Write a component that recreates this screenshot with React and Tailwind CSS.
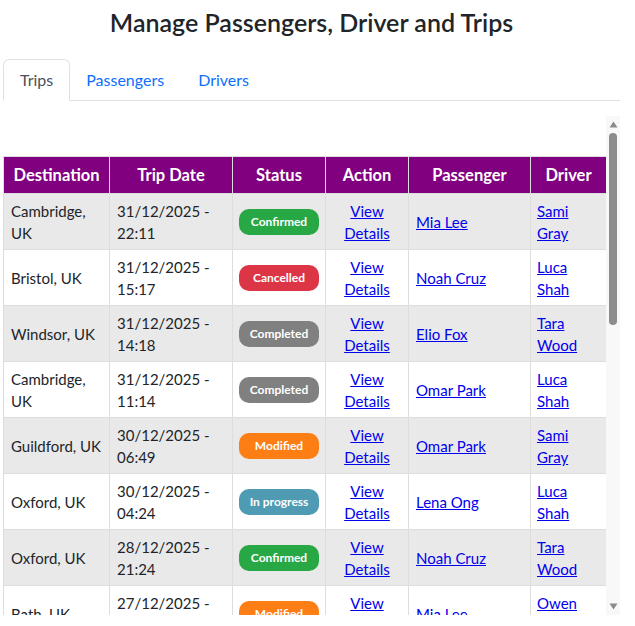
import React from "react";

const rows = [
  ["Cambridge, UK", "31/12/2025 - 22:11", "Confirmed", "Mia Lee", "Sami Gray"],
  ["Bristol, UK", "31/12/2025 - 15:17", "Cancelled", "Noah Cruz", "Luca Shah"],
  ["Windsor, UK", "31/12/2025 - 14:18", "Completed", "Elio Fox", "Tara Wood"],
  ["Cambridge, UK", "31/12/2025 - 11:14", "Completed", "Omar Park", "Luca Shah"],
  ["Guildford, UK", "30/12/2025 - 06:49", "Modified", "Omar Park", "Sami Gray"],
  ["Oxford, UK", "30/12/2025 - 04:24", "In progress", "Lena Ong", "Luca Shah"],
  ["Oxford, UK", "28/12/2025 - 21:24", "Confirmed", "Noah Cruz", "Tara Wood"],
  ["Bath, UK", "27/12/2025 - 19:05", "Modified", "Mia Lee", "Owen Hale"],
  ["Reading, UK", "26/12/2025 - 08:30", "Confirmed", "Elio Fox", "Sami Gray"],
];

const badge = {
  Confirmed: "bg-[#28a745]",
  Cancelled: "bg-[#dc3545]",
  Completed: "bg-[#808080]",
  Modified: "bg-[#fd7e14]",
  "In progress": "bg-[#4e9bb3]",
};

const font = { fontFamily: "Lato, 'Liberation Sans', sans-serif" };

export default function App() {
  return (
    <div className="bg-white text-[#212529] w-[635px] h-[626px] overflow-hidden" style={font}>
      <div className="ml-[3px] w-[617px]">
        <h2 className="text-center text-[25px] font-semibold leading-[32px] pt-[6px] mb-[21px] text-[#212529]">
          Manage Passengers, Driver and Trips
        </h2>
        <div className="flex border-b border-[#dee2e6] h-[42px]">
          <div className="-mb-px px-4 h-[42px] flex items-center text-[16px] text-[#495057] bg-white border border-[#dee2e6] border-b-white rounded-t-[6px]">
            Trips
          </div>
          <div className="px-4 h-[42px] flex items-center text-[16px] text-[#0d6efd]">Passengers</div>
          <div className="pl-[18px] pr-4 h-[42px] flex items-center text-[16px] text-[#0d6efd]">Drivers</div>
        </div>
        <div className="flex mt-[15px] h-[499px]">
          <div className="w-[603px] h-full overflow-hidden pt-[40px]">
            <table className="table-fixed border-collapse w-[603px] text-[15px] leading-[22px]">
              <colgroup>
                <col className="w-[106px]" />
                <col className="w-[123px]" />
                <col className="w-[93px]" />
                <col className="w-[83px]" />
                <col className="w-[122px]" />
                <col className="w-[76px]" />
              </colgroup>
              <thead>
                <tr className="bg-[#800080] text-white text-[16.5px] font-bold">
                  {["Destination", "Trip Date", "Status", "Action", "Passenger", "Driver"].map((h) => (
                    <th key={h} className="border border-[#dddddd] py-[6px] leading-[24px] text-center font-bold">
                      {h}
                    </th>
                  ))}
                </tr>
              </thead>
              <tbody>
                {rows.map((r, i) => (
                  <tr key={i} className={i % 2 === 0 ? "bg-[#e9e9e9]" : "bg-white"}>
                    <td className="border border-[#dddddd] px-[7px] pt-[6px] pb-[5px] align-middle">{r[0]}</td>
                    <td className="border border-[#dddddd] px-[7px] pt-[6px] pb-[5px] align-middle">{r[1]}</td>
                    <td className="border border-[#dddddd] px-[6px] pt-[6px] pb-[5px] align-middle">
                      <div className="flex justify-center">
                        <span className={`${badge[r[2]]} w-[80px] h-[26px] rounded-[10px] text-white text-[12px] font-bold flex items-center justify-center`}>
                          {r[2]}
                        </span>
                      </div>
                    </td>
                    <td className="border border-[#dddddd] px-[7px] pt-[6px] pb-[5px] text-center align-middle">
                      <a href="#" className="text-[#0000ee] underline">View Details</a>
                    </td>
                    <td className="border border-[#dddddd] px-[7px] pt-[6px] pb-[5px] align-middle">
                      <a href="#" className="text-[#0000ee] underline">{r[3]}</a>
                    </td>
                    <td className="border border-[#dddddd] px-[6px] pt-[6px] pb-[5px] align-middle">
                      <a href="#" className="text-[#0000ee] underline">{r[4]}</a>
                    </td>
                  </tr>
                ))}
              </tbody>
            </table>
          </div>
          <div className="w-[14px] h-full bg-[#f8f8f8] flex flex-col items-center">
            <svg width="9" height="7" viewBox="0 0 9 7" className="mt-[5px]">
              <path d="M4.5 0.5 L8.5 6.5 L0.5 6.5 Z" fill="#8a8a8a" />
            </svg>
            <div className="mt-[5px] w-[8px] h-[192px] rounded-full bg-[#8c8c8c]" />
            <div className="flex-1" />
            <svg width="9" height="7" viewBox="0 0 9 7" className="mb-[5px]">
              <path d="M0.5 0.5 L8.5 0.5 L4.5 6.5 Z" fill="#8a8a8a" />
            </svg>
          </div>
        </div>
      </div>
    </div>
  );
}
